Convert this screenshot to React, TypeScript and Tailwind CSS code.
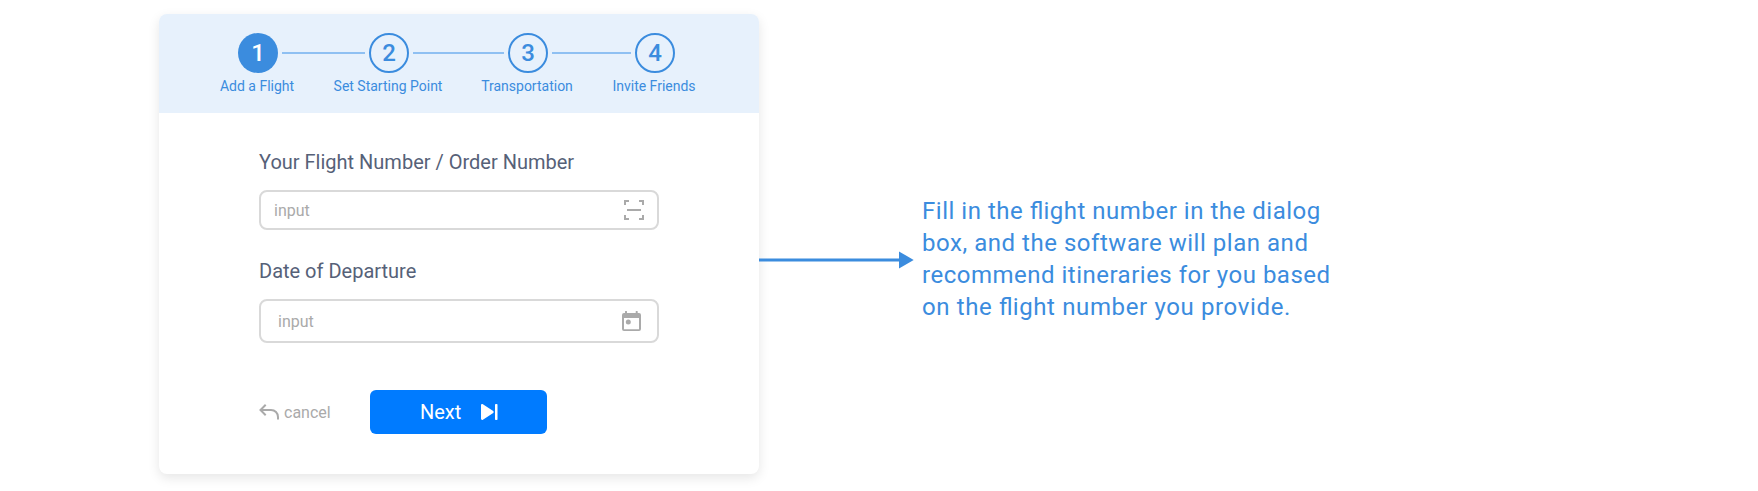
import React from "react";

function Step({ n, label, active = false }: { n: number; label: string; active?: boolean }) {
  return (
    <li className="flex w-10 flex-col items-center">
      <span
        className={
          active
            ? "flex size-10 items-center justify-center rounded-full bg-[#3b8cde] text-2xl font-medium text-white"
            : "flex size-10 items-center justify-center rounded-full border-2 border-[#3b8cde] text-2xl font-medium text-[#3b8cde]"
        }
      >
        {n}
      </span>
      <span className="mt-1 mr-0.5 text-sm leading-[18px] whitespace-nowrap text-[#3b8cde]">{label}</span>
    </li>
  );
}

function ScanIcon() {
  return (
    <svg width="20" height="20" viewBox="0 0 20 20" fill="none" stroke="#aaaaaa" strokeWidth="2">
      <path d="M5 1H1v4M15 1h4v4M5 19H1v-4M15 19h4v-4M3 10h14" />
    </svg>
  );
}

function CalendarIcon() {
  return (
    <svg width="19" height="20" viewBox="0 0 19 20" fill="#aaaaaa">
      <path
        fillRule="evenodd"
        d="M3 .8a.8.800 0 0 1 2 0V2h8.700V.8a.8.800 0 0 1 2 0V2H17a2 2 0 0 1 2 2v14a2 2 0 0 1-2 2H2a2 2 0 0 1-2-2V4a2 2 0 0 1 2-2h1ZM2 7v11.200h15V7H2Z"
      />
      <circle cx="6.300" cy="11" r="2.500" />
    </svg>
  );
}

function BackIcon() {
  return (
    <svg width="20" height="16" viewBox="0 0 20 16" fill="none" stroke="#aaaaaa" strokeWidth="2">
      <path d="M6.700 .8 1.500 6l5.200 5.200M1.500 6H12c4 0 7 3 7 7v2.500" />
    </svg>
  );
}

function NextIcon() {
  return (
    <svg width="17" height="16" viewBox="0 0 17 16" fill="#fff">
      <path d="M0 1.200C0 .2 1.100-.3 1.900.3l10.300 6.800c.6.400.6 1.400 0 1.800L1.900 15.700C1.100 16.300 0 15.800 0 14.800Z" />
      <rect x="14" y="0" width="2.500" height="16" rx=".8" />
    </svg>
  );
}

export default function App() {
  return (
    <main className="flex h-[491px] w-full overflow-hidden bg-white pt-[14px] pl-[159px] font-['Roboto',sans-serif]">
      <section className="h-[460px] w-[600px] shrink-0 overflow-hidden rounded-lg bg-white shadow-[0_4px_12px_rgba(0,0,0,0.1)]">
        <ol className="flex h-[99px] bg-[#e7f1fc] pt-[19px] pl-[79px]">
          <Step n={1} label="Add a Flight" active />
          <li className="mx-1 mt-[19px] h-0.5 w-[83px] bg-[#8fc0f2]" />
          <Step n={2} label="Set Starting Point" />
          <li className="mx-1 mt-[19px] h-0.5 w-[91px] bg-[#8fc0f2]" />
          <Step n={3} label="Transportation" />
          <li className="mx-1 mt-[19px] h-0.5 w-[79px] bg-[#8fc0f2]" />
          <Step n={4} label="Invite Friends" />
        </ol>
        <div className="px-[100px] pt-[37px] text-[#566178]">
          <div className="text-xl leading-6">Your Flight Number / Order Number</div>
          <div className="mt-4 flex h-10 w-[400px] items-center justify-between rounded-lg border-2 border-[#d9d9d9] pr-[13px] pl-[13px] text-base text-[#aaaaaa]">
            <span className="pt-px">input</span>
            <ScanIcon />
          </div>
          <div className="mt-[29px] text-xl leading-6">Date of Departure</div>
          <div className="mt-4 flex h-11 w-[400px] items-center justify-between rounded-lg border-2 border-[#d9d9d9] pr-4 pl-[17px] text-base text-[#aaaaaa]">
            <span className="pt-0.5">input</span>
            <CalendarIcon />
          </div>
          <div className="mt-[47px] flex items-center">
            <button className="flex w-[111px] items-center gap-[5px] text-base text-[#aaaaaa]">
              <BackIcon />
              <span className="pt-0.5">cancel</span>
            </button>
            <button className="flex h-11 w-[177px] items-center rounded-md bg-[#007bff] pl-[50px] text-xl text-white">
              <span className="w-[61px] text-left">Next</span>
              <NextIcon />
            </button>
          </div>
        </div>
      </section>
      <svg className="mt-[237px] shrink-0" width="155" height="18" viewBox="0 0 155 18" fill="#3b8cde">
        <path d="M0 7.500h140v3H0ZM140 .4 154.700 9 140 17.600Z" />
      </svg>
      <p className="mt-[181px] ml-2 text-2xl leading-8 whitespace-nowrap text-[#3b8cde]">
        <span className="block tracking-[0.52px]">
          Fill in the <span className="tracking-normal">fl</span>ight number in the dialog
        </span>
        <span className="block tracking-[0.53px]">box, and the software will plan and</span>
        <span className="block tracking-[0.5px]">recommend itineraries for you based</span>
        <span className="block tracking-[0.63px]">
          on the <span className="tracking-normal">fl</span>ight number you provide.
        </span>
      </p>
    </main>
  );
}
